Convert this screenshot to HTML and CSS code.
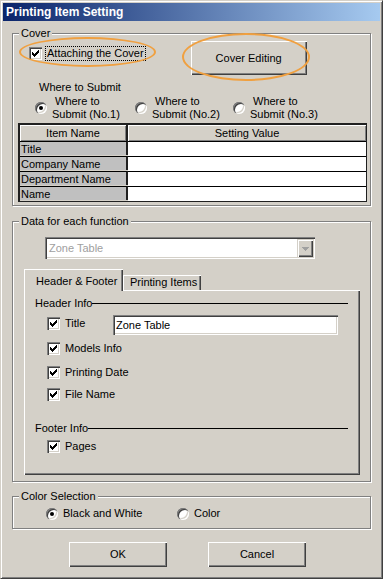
FILE: index.html
```html
<!DOCTYPE html>
<html>
<head>
<meta charset="UTF-8">
<title>Printing Item Setting</title>
<link rel="stylesheet" href="styles.css">
</head>
<body>
<div class="window">
<div class="titlebar">Printing Item Setting</div>
<div class="client">

<fieldset class="group cover">
<legend>Cover</legend>
<div class="cover-top">
  <div class="attach mark mark-check">
    <span class="check"><svg width="13" height="13" viewBox="0 0 13 13"><path d="M3 5h1v3h-1zM4 6h1v3h-1zM5 7h1v3h-1zM6 6h1v3h-1zM7 5h1v3h-1zM8 4h1v3h-1zM9 3h1v3h-1z" fill="#000"/></svg></span>
    <span class="focus">Attaching the Cover</span>
  </div>
  <div class="button edit-btn mark mark-btn">Cover Editing</div>
</div>
<div class="submit-title">Where to Submit</div>
<div class="submit-row">
  <div class="opt opt-a"><span class="radio on"></span><span class="two-line">Where to<br>Submit (No.1)</span></div>
  <div class="opt opt-b"><span class="radio"></span><span class="two-line">Where to<br>Submit (No.2)</span></div>
  <div class="opt"><span class="radio"></span><span class="two-line">Where to<br>Submit (No.3)</span></div>
</div>
<div class="items">
  <div class="th col1">Item Name</div><div class="th">Setting Value</div>
  <div class="name col1">Title</div><div class="value"></div>
  <div class="name col1">Company Name</div><div class="value"></div>
  <div class="name col1">Department Name</div><div class="value"></div>
  <div class="name col1">Name</div><div class="value"></div>
</div>
</fieldset>

<fieldset class="group data">
<legend>Data for each function</legend>
<div class="combo">
  <span class="combo-text">Zone Table</span>
  <span class="drop"><svg width="7" height="4" viewBox="0 0 7 4"><path d="M0 0h7v1h-1v1h-1v1h-1v1h-1v-1h-1v-1h-1v-1h-1z" fill="#a0a0a0"/></svg></span>
</div>
<div class="tabs">
  <div class="tab selected">Header &amp; Footer</div>
  <div class="tab">Printing Items</div>
</div>
<div class="panel">
  <div class="section sec-header"><span>Header Info</span><span class="rule"></span></div>
  <div class="row row-title">
    <span class="check"><svg width="13" height="13" viewBox="0 0 13 13"><path d="M3 5h1v3h-1zM4 6h1v3h-1zM5 7h1v3h-1zM6 6h1v3h-1zM7 5h1v3h-1zM8 4h1v3h-1zM9 3h1v3h-1z" fill="#000"/></svg></span>
    <span class="row-label title-label">Title</span>
    <div class="field">Zone Table</div>
  </div>
  <div class="row row-models">
    <span class="check"><svg width="13" height="13" viewBox="0 0 13 13"><path d="M3 5h1v3h-1zM4 6h1v3h-1zM5 7h1v3h-1zM6 6h1v3h-1zM7 5h1v3h-1zM8 4h1v3h-1zM9 3h1v3h-1z" fill="#000"/></svg></span>
    <span class="row-label">Models Info</span>
  </div>
  <div class="row row-date">
    <span class="check"><svg width="13" height="13" viewBox="0 0 13 13"><path d="M3 5h1v3h-1zM4 6h1v3h-1zM5 7h1v3h-1zM6 6h1v3h-1zM7 5h1v3h-1zM8 4h1v3h-1zM9 3h1v3h-1z" fill="#000"/></svg></span>
    <span class="row-label">Printing Date</span>
  </div>
  <div class="row row-file">
    <span class="check"><svg width="13" height="13" viewBox="0 0 13 13"><path d="M3 5h1v3h-1zM4 6h1v3h-1zM5 7h1v3h-1zM6 6h1v3h-1zM7 5h1v3h-1zM8 4h1v3h-1zM9 3h1v3h-1z" fill="#000"/></svg></span>
    <span class="row-label">File Name</span>
  </div>
  <div class="section sec-footer"><span>Footer Info</span><span class="rule"></span></div>
  <div class="row row-pages">
    <span class="check"><svg width="13" height="13" viewBox="0 0 13 13"><path d="M3 5h1v3h-1zM4 6h1v3h-1zM5 7h1v3h-1zM6 6h1v3h-1zM7 5h1v3h-1zM8 4h1v3h-1zM9 3h1v3h-1z" fill="#000"/></svg></span>
    <span class="row-label">Pages</span>
  </div>
</div>
</fieldset>

<fieldset class="group colors">
<legend>Color Selection</legend>
<div class="color-row">
  <div class="opt opt-bw"><span class="radio on"></span><span>Black and White</span></div>
  <div class="opt"><span class="radio"></span><span>Color</span></div>
</div>
</fieldset>

<div class="buttons">
  <div class="button dlg-btn">OK</div>
  <div class="button dlg-btn">Cancel</div>
</div>

</div>
</div>
</body>
</html>
```

FILE: styles.css
```css
body { margin: 0; background: #d4d0c8; font-family: "Liberation Sans", Arial, sans-serif; font-size: 11px; line-height: 13px; color: #000; }

/* window frame */
.window { box-sizing: border-box; width: 383px; height: 579px; padding: 2px; border: 1px solid; border-color: #d4d0c8 #404040 #404040 #d4d0c8; box-shadow: inset 1px 1px 0 #fff, inset -1px -1px 0 #808080; background: #d4d0c8; }
.titlebar { height: 18px; line-height: 18px; padding-left: 3px; color: #fff; font-weight: bold; font-size: 12px; background: linear-gradient(to right, #0a246a, #a6caf0); }
.client { padding: 0 9px; }

/* group boxes */
.group { margin: 0; padding: 0; min-width: 0; border: 1px solid #808080; box-shadow: 1px 1px 0 #fff, inset 1px 1px 0 #fff; }
.group legend { margin-left: 6px; padding: 0 2px; line-height: 13px; background: #d4d0c8; }
.group.cover { margin-top: 6px; padding-bottom: 3px; }
.group.data { margin-top: 9px; padding-bottom: 6px; }
.group.colors { margin-top: 8px; padding-bottom: 8px; }

/* common controls */
.check { display: block; flex: none; width: 13px; height: 13px; background: #fff; box-shadow: inset 1px 1px 0 #808080, inset 2px 2px 0 #404040, inset -1px -1px 0 #fff, inset -2px -2px 0 #d4d0c8; }
.check svg { display: block; }
.radio { position: relative; display: block; flex: none; width: 12px; height: 12px; border-radius: 50%; background: #fff; box-shadow: inset 1px 1px 0 #808080, inset 2px 2px 0 #404040, inset -1px -1px 0 #fff, inset -2px -2px 0 #d4d0c8; }
.radio.on::after { content: ""; position: absolute; left: 4px; top: 4px; width: 4px; height: 4px; border-radius: 50%; background: #000; }
.button { text-align: center; background: #d4d0c8; box-shadow: inset 1px 1px 0 #fff, inset -1px -1px 0 #404040, inset -2px -2px 0 #808080; }

/* orange highlight rings */
.mark { position: relative; }
.mark::after { content: ""; position: absolute; border: 2px solid #f0a040; border-radius: 50%; }
.mark-check::after { left: -10px; right: -10px; top: -9px; bottom: -6px; }
.mark-btn::after { left: -9px; right: -3px; top: -8px; bottom: -6px; }

/* cover */
.cover-top { display: flex; align-items: flex-start; margin-top: 1px; }
.attach { display: flex; align-items: center; margin: 5px 0 0 16px; }
.attach .check { margin-right: 3px; }
.focus { border: 1px dotted #000; padding: 0 1px; }
.edit-btn { width: 116px; height: 34px; line-height: 34px; margin-left: 45px; }
.submit-title { margin: 6px 0 0 26px; }
.submit-row { display: flex; margin: 1px 0 0 22px; }
.opt { display: flex; align-items: center; }
.opt .radio { margin-right: 5px; }
.opt-a { width: 100px; }
.opt-b { width: 98px; }
.two-line { text-indent: 3px; }

.items { display: grid; grid-template-columns: 108px 238px; width: max-content; margin: 2px 0 0 5px; border: solid #202020; border-width: 2px 1px 1px 2px; }
.items .col1 { box-sizing: border-box; border-right: 2px solid #202020; }
.th { height: 16px; line-height: 16px; text-align: center; background: #d4d0c8; box-shadow: inset 1px 1px 0 #fff, inset -1px -1px 0 #808080; }
.name, .value { height: 14px; line-height: 14px; border-top: 1px solid #000; }
.name { padding-left: 1px; background: #c0c0c0; }
.value { background: #fff; }

/* data for each function */
.combo { display: flex; align-items: center; box-sizing: border-box; width: 270px; height: 22px; margin: 9px 0 0 32px; padding: 2px; background: #fff; box-shadow: inset 1px 1px 0 #808080, inset 2px 2px 0 #404040, inset -1px -1px 0 #fff, inset -2px -2px 0 #d4d0c8; }
.combo-text { flex: 1; padding-left: 2px; color: #a0a0a0; }
.drop { display: flex; align-items: center; justify-content: center; width: 16px; height: 18px; background: #d4d0c8; box-shadow: inset 1px 1px 0 #d4d0c8, inset 2px 2px 0 #fff, inset -1px -1px 0 #404040, inset -2px -2px 0 #808080; }
.drop svg { display: block; margin-top: 1px; }

.tabs { display: flex; align-items: flex-end; height: 21px; margin: 10px 0 0 11px; }
.tab { box-sizing: border-box; width: 78px; height: 15px; padding: 1px 0 0 7px; background: #d4d0c8; box-shadow: inset 1px 1px 0 #fff, inset -1px 0 0 #404040, inset -2px 0 0 #808080; }
.tab.selected { position: relative; z-index: 1; width: 99px; height: 22px; margin-bottom: -1px; padding: 6px 0 0 12px; }
.panel { box-sizing: border-box; width: 336px; height: 185px; margin-left: 11px; padding-top: 7px; background: #d4d0c8; box-shadow: inset 1px 1px 0 #fff, inset -1px -1px 0 #404040, inset -2px -2px 0 #808080; }
.section { display: flex; align-items: center; margin: 0 12px 0 11px; }
.rule { flex: 1; height: 1px; background: #000; }
.sec-footer { margin-top: 21px; }
.row { display: flex; align-items: center; height: 13px; padding-left: 23px; }
.row-label { margin-left: 5px; }
.row-title { align-items: flex-start; height: 20px; margin-top: 5px; }
.row-title .check, .row-title .row-label { margin-top: 2px; }
.title-label { width: 48px; }
.field { box-sizing: border-box; width: 225px; height: 20px; line-height: 20px; padding-left: 3px; background: #fff; box-shadow: inset 1px 1px 0 #808080, inset 2px 2px 0 #404040, inset -1px -1px 0 #fff, inset -2px -2px 0 #d4d0c8; }
.row-models { margin-top: 7px; }
.row-date { margin-top: 11px; }
.row-file { margin-top: 9px; }
.row-pages { margin-top: 5px; }

/* color selection */
.color-row { display: flex; height: 13px; margin: 4px 0 0 33px; }
.opt-bw { width: 131px; }

/* dialog buttons */
.buttons { display: flex; gap: 41px; margin: 13px 0 0 57px; }
.dlg-btn { width: 98px; height: 25px; line-height: 25px; }
```
